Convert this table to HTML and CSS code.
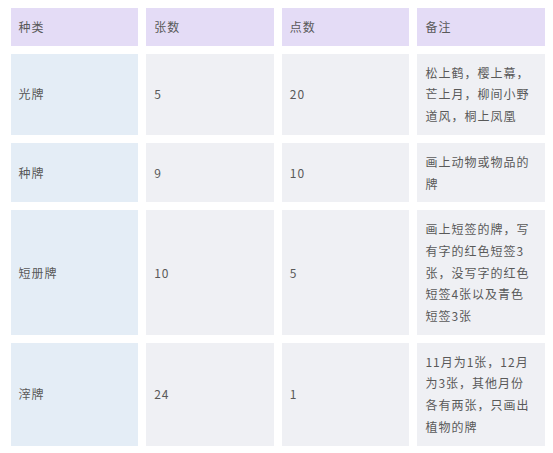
FILE: index.html
```html
<!DOCTYPE html>
<html lang="zh">
<head>
<meta charset="utf-8">
<link rel="stylesheet" href="styles.css">
</head>
<body>
<div class="table">
  <div class="cell head"><span>种类</span></div>
  <div class="cell head"><span>张数</span></div>
  <div class="cell head"><span>点数</span></div>
  <div class="cell head"><span>备注</span></div>

  <div class="cell first"><span>光牌</span></div>
  <div class="cell"><span>5</span></div>
  <div class="cell"><span>20</span></div>
  <div class="cell"><span>松上鹤，樱上幕，芒上月，柳间小野道风，桐上凤凰</span></div>

  <div class="cell first"><span>种牌</span></div>
  <div class="cell"><span>9</span></div>
  <div class="cell"><span>10</span></div>
  <div class="cell"><span>画上动物或物品的牌</span></div>

  <div class="cell first"><span>短册牌</span></div>
  <div class="cell"><span>10</span></div>
  <div class="cell"><span>5</span></div>
  <div class="cell"><span>画上短签的牌，写有字的红色短签3张，没写字的红色短签4张以及青色短签3张</span></div>

  <div class="cell first"><span>滓牌</span></div>
  <div class="cell"><span>24</span></div>
  <div class="cell"><span>1</span></div>
  <div class="cell"><span>11月为1张，12月为3张，其他月份各有两张，只画出植物的牌</span></div>
</div>
</body>
</html>
```

FILE: styles.css
```css
html, body {
  margin: 0;
  padding: 0;
  background: #ffffff;
}

.table {
  display: grid;
  grid-template-columns: repeat(4, minmax(0, 1fr));
  gap: 8px;
  padding: 8px 8px 8px 10.5px;
  font-family: "Noto Sans CJK SC", sans-serif;
  font-size: 12px;
  line-height: 21.7px;
  letter-spacing: 1px;
  color: #595959;
}

.cell {
  display: flex;
  align-items: center;
  padding: 8px 12px 8px 8px;
  background: #eff0f4;
  word-break: break-all;
}

.cell.head {
  background: #e4dcf6;
}

.cell.first {
  background: #e4edf6;
}
```
